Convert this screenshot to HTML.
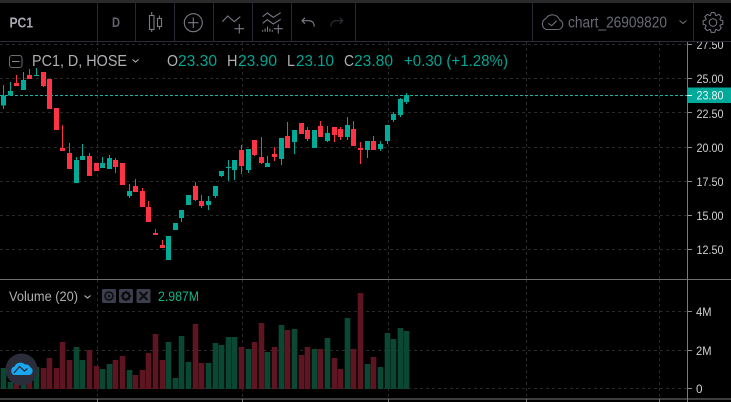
<!DOCTYPE html>
<html><head><meta charset="utf-8"><style>
html,body{margin:0;padding:0;background:#000;width:731px;height:402px;overflow:hidden}
svg{display:block}
text{font-family:"Liberation Sans",sans-serif;white-space:pre}
</style></head><body>
<svg width="731" height="402" viewBox="0 0 731 402" xmlns="http://www.w3.org/2000/svg">
<rect width="731" height="402" fill="#000"/>
<!-- grid -->
<g stroke="#292929" stroke-width="1" stroke-dasharray="3 3" fill="none">
<path d="M0 44.5H687M0 78.5H687M0 112.5H687M0 147.5H687M0 181.5H687M0 215.5H687M0 249.5H687"/>
<path d="M0 311.5H687M0 350.5H687M0 388.5H687"/>
<path d="M97.5 42V279M242.5 42V279M388.5 42V279M526.5 42V279M659.5 42V279M97.5 280V399M242.5 280V399M388.5 280V399M526.5 280V399M659.5 280V399"/>
</g>
<!-- volume bars -->
<path fill="none" stroke="#0a4834" stroke-width="5.6" d="M3.5 368V389M10.5 382V389M23.5 375V389M36.5 367V389M76.5 347V389M82.5 360V389M102.5 369V389M109.5 364V389M129.5 370V389M168.5 342V389M175.5 378V389M181.5 336V389M188.5 362V389M208.5 363V389M215.5 343V389M221.5 345V389M228.5 337V389M234.5 337V389M248.5 349V389M267.5 352V389M281.5 325V389M294.5 329V389M314.5 349V389M327.5 338V389M347.5 318V389M367.5 364V389M380.5 367V389M387.5 333V389M393.5 339V389M400.5 328V389M406.5 331V389"/>
<path fill="none" stroke="#5e1522" stroke-width="5.6" d="M16.5 372V389M29.5 372V389M43.5 368V389M49.5 358V389M56.5 368V389M62.5 342V389M69.5 360V389M89.5 350V389M96.5 366V389M115.5 360V389M122.5 356V389M135.5 375V389M142.5 370V389M148.5 353V389M155.5 334V389M162.5 360V389M195.5 324V389M201.5 363V389M241.5 347V389M254.5 342V389M261.5 323V389M274.5 347V389M287.5 330V389M301.5 355V389M307.5 347V389M320.5 349V389M334.5 358V389M340.5 369V389M353.5 349V389M360.5 293V389M373.5 357V389"/>
<!-- last price line -->
<path d="M0 95.5H687" stroke="#1fb0a4" stroke-width="1" stroke-dasharray="3 2"/>
<!-- green wicks -->
<path fill="none" stroke="#00ab9a" stroke-width="1" d="M3.5 85V109M10.5 82V96M23.5 72V90M36.5 68V76M76.5 157V183M82.5 144V160M102.5 157V168M109.5 155V169M129.5 184V198M181.5 210V222M208.5 196V210M215.5 186V198M221.5 171V177M228.5 160V181M234.5 160V180M248.5 149V173M267.5 156V167M281.5 138V165M294.5 130V154M327.5 126V142M347.5 117V140M367.5 141V158M380.5 141V151M387.5 125V144M393.5 112V122M400.5 98V117M406.5 93V104"/>
<!-- green bodies -->
<path fill="none" stroke="#00ab9a" stroke-width="5" d="M3.5 95.5V105.5M10.5 91V95.5M23.5 80V90M76.5 160V183M82.5 156V160M102.5 163V168M109.5 158V169M129.5 191V196M168.5 236V260M175.5 223V230M181.5 210V218M188.5 195V205M208.5 201V205M215.5 186V196M221.5 171V176M234.5 160V170M248.5 149V170M267.5 163V167M281.5 138V159M294.5 130V142M314.5 130V148M327.5 133V141M347.5 125V137M367.5 141V150M380.5 144V149M387.5 125V141M393.5 114V120M400.5 99V115M406.5 95V102"/>
<path d="M34 75.5H39M226 167.5H231" stroke="#00ab9a" stroke-width="1"/>
<!-- red wicks -->
<path fill="none" stroke="#ff3344" stroke-width="1" d="M16.5 75V86M29.5 69V79M43.5 72V87M62.5 125V151M69.5 143V169M89.5 153V176M115.5 158V173M135.5 179V192M142.5 188V207M148.5 201V222M155.5 229V235M162.5 240V248M195.5 182V201M201.5 195V208M241.5 145V174M254.5 140V156M261.5 137V164M274.5 147V161M287.5 122V148M307.5 127V141M320.5 121V137M334.5 127V142M340.5 127V140M353.5 121V146M360.5 142V164M373.5 136V150"/>
<!-- red bodies -->
<path fill="none" stroke="#ff3344" stroke-width="5" d="M16.5 83V86M29.5 75V79M43.5 72V86M49.5 79V109M56.5 108V130M62.5 148V151M69.5 153V169M89.5 156V176M96.5 163V171M115.5 160V167M122.5 163V185M135.5 186V192M142.5 191V207M148.5 207V222M155.5 233V235M162.5 245V248M195.5 186V200M201.5 201V206M241.5 150V166M254.5 140V155M261.5 157V163M274.5 154V157M287.5 136V148M301.5 123V134M307.5 130V139M320.5 126V137M334.5 127V135M340.5 129V137M353.5 129V146M360.5 148V150M373.5 141V150"/>
<!-- top strip & toolbar -->
<rect x="0" y="0" width="731" height="41" fill="#000"/>
<rect x="0" y="0" width="731" height="3" fill="#2a2a2c"/>
<path d="M0 41.5H731" stroke="#2a2e39"/>
<path d="M97.5 3V41M135.5 3V41M174.5 3V41M213.5 3V41M252.5 3V41M291.5 3V41M355.5 3V41M532.5 3V41M693.5 3V41" stroke="#262933"/>
<text x="9.5" y="27.500" font-size="14.500" font-weight="700" fill="#a8abb4" textLength="23.500" lengthAdjust="spacingAndGlyphs">PC1</text>
<text x="112" y="27" font-size="14" font-weight="700" fill="#63666f" textLength="8" lengthAdjust="spacingAndGlyphs">D</text>
<!-- toolbar icons -->
<g fill="none" stroke="#787b86" stroke-width="1.1">
<rect x="149.5" y="15.5" width="4.500" height="14"/><path d="M151.700 12V15.500M151.700 29.500V32"/>
<rect x="157.500" y="18.500" width="4" height="8"/><path d="M159.500 15.500V18.500M159.500 26.500V29.500"/>
<circle cx="193.300" cy="22.700" r="9"/><path d="M193.300 17.500V28M188 22.700H198.500"/>
<path d="M222.300 21.700L227.700 16L234.300 21.700L240.300 16.700"/><path d="M239.300 24V33.500M234.500 28.700H244"/>
<path d="M262.700 16.700L267.300 13L273.300 17.300L280.700 12.700M262.700 23.300L267.300 19.700L273.300 24L280.700 19.300"/>
<path d="M262.700 31.700V30M265.100 31.700V28.500M267.500 31.700V26.500M269.900 31.700V28.500M272.300 31.700V30M278.300 24.500V33.500M273.800 28.700H282.800"/>
<path d="M305 17.700L302 20.700L305 23.700M302 20.700H309Q314 21 314.300 26.700"/>
</g>
<path d="M339.700 17.700L342.700 20.700L339.700 23.700M342.700 20.700H335.700Q331 21 330.700 26.700" fill="none" stroke="#2e3036" stroke-width="1.1"/>
<!-- cloud -->
<g fill="none" stroke="#6a6d76" stroke-width="1.1">
<path d="M546 29.500H558A5 5 0 0 0 559.500 19.800A7.500 7.500 0 0 0 546 18.500A6 6 0 0 0 546 29.500Z"/>
<path d="M548.300 23.300L551.700 25.700L556.700 20.700"/>
<path d="M679.500 20.500L683 23.500L686.500 20.500"/>
</g>
<text x="568" y="27.500" font-size="15.500" fill="#686b74" textLength="99" lengthAdjust="spacingAndGlyphs">chart_26909820</text>
<g transform="translate(713,22.5)" fill="none" stroke="#787b86" stroke-width="1"><path d="M7.14 -2.6L9.85 -1.74L9.85 1.74L7.14 2.6L6.89 3.21L8.19 5.74L5.74 8.19L3.21 6.89L2.6 7.14L1.74 9.85L-1.74 9.85L-2.6 7.14L-3.21 6.89L-5.74 8.19L-8.19 5.74L-6.89 3.21L-7.14 2.6L-9.85 1.74L-9.85 -1.74L-7.14 -2.6L-6.89 -3.21L-8.19 -5.74L-5.74 -8.19L-3.21 -6.89L-2.6 -7.14L-1.74 -9.85L1.74 -9.85L2.6 -7.14L3.21 -6.89L5.74 -8.19L8.19 -5.74L6.89 -3.21Z"/><circle r="3.8"/></g>
<!-- legend -->
<rect x="9.500" y="55.500" width="12.500" height="12" rx="2.500" fill="none" stroke="#6a6d76"/><path d="M12 61.500H19.500" stroke="#8a8d96"/>
<text x="32" y="66" font-size="16" fill="#b0b0b4" textLength="95" lengthAdjust="spacingAndGlyphs">PC1, D, HOSE</text>
<path d="M132.500 59.500L135.500 62L138.500 59.500" fill="none" stroke="#b2b5be" stroke-width="1.1"/>
<g font-size="16" fill="#b0b0b4">
<text x="167" y="66" textLength="11" lengthAdjust="spacingAndGlyphs">O</text>
<text x="227" y="66" textLength="10.500" lengthAdjust="spacingAndGlyphs">H</text>
<text x="287" y="66" textLength="8" lengthAdjust="spacingAndGlyphs">L</text>
<text x="344" y="66" textLength="10" lengthAdjust="spacingAndGlyphs">C</text>
</g>
<g font-size="16" fill="#00a594">
<text x="178" y="66" textLength="39" lengthAdjust="spacingAndGlyphs">23.30</text>
<text x="238" y="66" textLength="39" lengthAdjust="spacingAndGlyphs">23.90</text>
<text x="296" y="66" textLength="38" lengthAdjust="spacingAndGlyphs">23.10</text>
<text x="354" y="66" textLength="39" lengthAdjust="spacingAndGlyphs">23.80</text>
<text x="404" y="66" textLength="104" lengthAdjust="spacingAndGlyphs">+0.30 (+1.28%)</text>
</g>
<!-- separators -->
<path d="M0 279.500H731" stroke="#6e6e70"/>
<path d="M0 399H731" stroke="#7a7a7c" stroke-width="1"/>
<path d="M687.500 42V399" stroke="#7a7a7c"/>
<path d="M97.500 399V402M242.500 399V402M388.500 399V402M526.500 399V402M659.500 399V402M687.500 399V402" stroke="#7a7a7c"/>
<!-- axis ticks -->
<path d="M688 44.500H692M688 78.500H692M688 112.500H692M688 147.500H692M688 181.500H692M688 215.500H692M688 249.500H692M688 311.500H692M688 350.500H692M688 388.500H692" stroke="#8a8a8c"/>
<!-- axis labels -->
<clipPath id="c"><rect x="688" y="42" width="43" height="360"/></clipPath>
<g font-size="12" fill="#d0d0d2" clip-path="url(#c)">
<text x="696.500" y="49" textLength="27" lengthAdjust="spacingAndGlyphs">27.50</text>
<text x="696.500" y="83" textLength="27" lengthAdjust="spacingAndGlyphs">25.00</text>
<text x="696.500" y="118" textLength="27" lengthAdjust="spacingAndGlyphs">22.50</text>
<text x="696.500" y="152" textLength="27" lengthAdjust="spacingAndGlyphs">20.00</text>
<text x="696.500" y="186" textLength="27" lengthAdjust="spacingAndGlyphs">17.50</text>
<text x="696.500" y="220" textLength="27" lengthAdjust="spacingAndGlyphs">15.00</text>
<text x="696.500" y="254" textLength="27" lengthAdjust="spacingAndGlyphs">12.50</text>
<text x="696" y="316" textLength="15.500" lengthAdjust="spacingAndGlyphs">4M</text>
<text x="696" y="355" textLength="15.500" lengthAdjust="spacingAndGlyphs">2M</text>
<text x="696" y="393" textLength="6.500" lengthAdjust="spacingAndGlyphs">0</text>
</g>
<rect x="687" y="87.500" width="44" height="15.500" fill="#00a99a"/>
<path d="M687 95.500H692" stroke="#e8fffb"/>
<text x="696.500" y="99.500" font-size="12" fill="#eafaf8" textLength="27" lengthAdjust="spacingAndGlyphs">23.80</text>
<!-- volume legend -->
<text x="9" y="301" font-size="13.500" fill="#b0b0b4" textLength="69" lengthAdjust="spacingAndGlyphs">Volume (20)</text>
<path d="M84.500 295.500L87.500 298L90.500 295.500" fill="none" stroke="#b2b5be" stroke-width="1.1"/>
<rect x="102" y="289" width="14" height="14" rx="1.500" fill="#3c3e4d"/>
<rect x="119" y="289" width="14" height="14" rx="1.500" fill="#3c3e4d"/>
<rect x="136.500" y="289" width="14" height="14" rx="1.500" fill="#3c3e4d"/>
<circle cx="109" cy="296" r="4" fill="none" stroke="#0d0d10" stroke-width="1.6"/><circle cx="109" cy="296" r="1.300" fill="#0d0d10"/>
<circle cx="126" cy="296" r="3.400" fill="none" stroke="#0d0d10" stroke-width="2.400"/>
<path d="M126 290.800V292.500M126 299.500V301.200M120.800 296H122.500M129.500 296H131.200M122.500 292.500L123.500 293.500M129.500 292.500L128.500 293.500M122.500 299.500L123.500 298.500M129.500 299.500L128.500 298.500" stroke="#0d0d10" stroke-width="1.400"/>
<path d="M139.500 292L147.500 300M147.500 292L139.500 300" stroke="#0d0d10" stroke-width="2"/>
<text x="158" y="301" font-size="13.500" fill="#0fb389" textLength="41" lengthAdjust="spacingAndGlyphs">2.987M</text>
<!-- logo -->
<circle cx="21.500" cy="369.500" r="16" fill="#2b2d3b"/>
<path d="M14 375H29A4 4 0 0 0 30.500 367.500A5 5 0 0 0 25 364.500A6.500 6.500 0 0 0 14.500 366.500A4.500 4.500 0 0 0 14 375Z" fill="#19a7f0"/>
<path d="M14 373L19.500 366.500L24.500 371L27.500 368.500" fill="none" stroke="#2b2d3b" stroke-width="1.300"/>
</svg>
</body></html>
